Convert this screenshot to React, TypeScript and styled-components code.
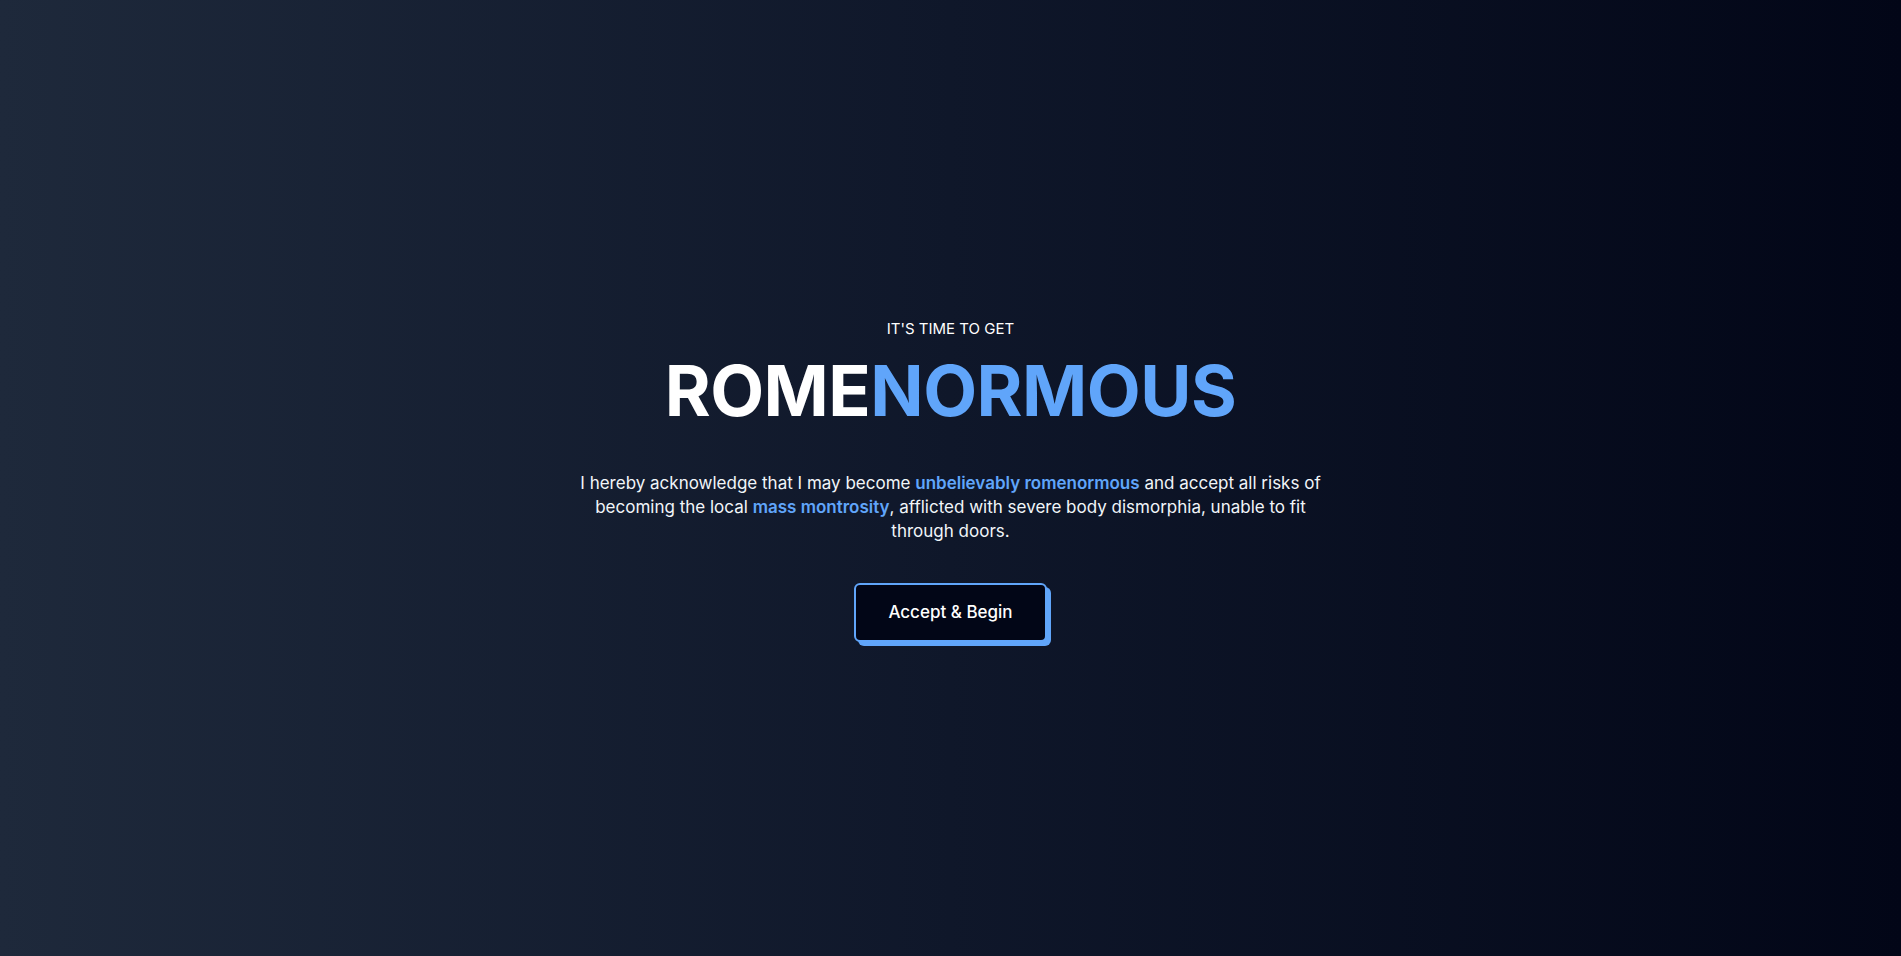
import React from 'react'
import styled, { createGlobalStyle } from 'styled-components'

const GlobalStyle = createGlobalStyle`
  html, body {
    margin: 0;
    padding: 0;
  }
  body {
    font-family: 'Inter', 'Open Sans', sans-serif;
    color: #ffffff;
    background: #020617;
  }
  * {
    box-sizing: border-box;
  }
`

const Screen = styled.main`
  min-height: 100vh;
  display: flex;
  align-items: center;
  justify-content: center;
  background: linear-gradient(to right, #1e293b, #0f172a, #020617);
  padding: 0 24px;
`

const Hero = styled.section`
  display: flex;
  flex-direction: column;
  align-items: center;
  text-align: center;
  max-width: 768px;
  padding-top: 2px;
`

const Kicker = styled.p`
  margin: 0 0 15px;
  font-size: 15px;
  line-height: 24px;
  font-weight: 400;
  text-transform: uppercase;
`

const Title = styled.h1`
  margin: 0 0 45px;
  font-size: 70px;
  line-height: 1;
  font-weight: 700;
  letter-spacing: -0.5px;
`

const Accent = styled.span<{ $bold?: boolean }>`
  color: #60a5fa;
  font-weight: ${({ $bold }) => ($bold ? 600 : 'inherit')};
`

const Lead = styled.p`
  margin: 0 0 40px;
  font-size: 17px;
  line-height: 24px;
  color: #f1f5f9;
`

const BeginButton = styled.button`
  font-family: inherit;
  font-size: 17px;
  font-weight: 500;
  line-height: 27px;
  color: #ffffff;
  background: #020617;
  border: 2px solid #60a5fa;
  border-radius: 6px;
  padding: 14px 32px;
  box-shadow: 4px 4px 0 #60a5fa;
  cursor: pointer;
`

export default function App() {
  return (
    <>
      <GlobalStyle />
      <Screen>
        <Hero>
          <Kicker>It's time to get</Kicker>
          <Title>
            ROME<Accent>NORMOUS</Accent>
          </Title>
          <Lead>
            I hereby acknowledge that I may become <Accent $bold>unbelievably romenormous</Accent> and
            accept all risks of becoming the local <Accent $bold>mass montrosity</Accent>, afflicted
            with severe body dismorphia, unable to fit through doors.
          </Lead>
          <BeginButton>Accept &amp; Begin</BeginButton>
        </Hero>
      </Screen>
    </>
  )
}
